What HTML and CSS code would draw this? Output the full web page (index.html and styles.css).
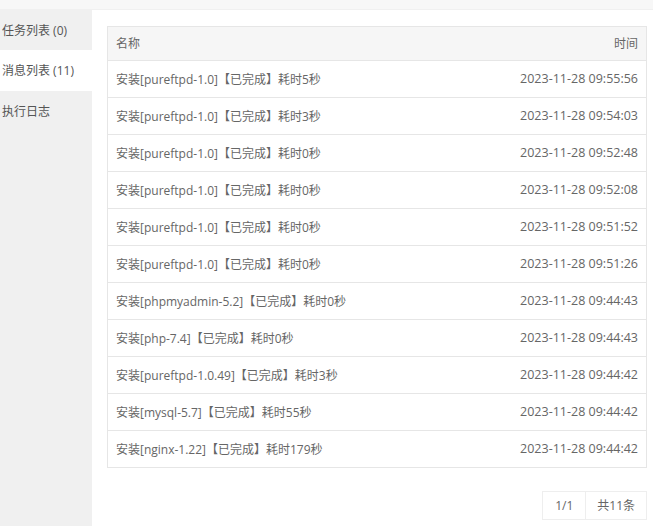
FILE: index.html
```html
<!DOCTYPE html>
<html lang="zh-CN">
<head>
    <meta charset="UTF-8">
    <title>消息列表</title>
    <link rel="stylesheet" href="styles.css">
</head>
<body>
    <div class="topbar"></div>
    <div class="layout">
        <!-- Tabs -->
        <ul class="tabs">
            <li>任务列表 (0)</li>
            <li class="active">消息列表 (11)</li>
            <li>执行日志</li>
        </ul>

        <!-- Message list -->
        <div class="content">
            <table class="msg-table">
                <thead>
                    <tr><th>名称</th><th class="time">时间</th></tr>
                </thead>
                <tbody>
                    <tr><td>安装[pureftpd-1.0]【已完成】耗时5秒</td><td class="time">2023-11-28 09:55:56</td></tr>
                    <tr><td>安装[pureftpd-1.0]【已完成】耗时3秒</td><td class="time">2023-11-28 09:54:03</td></tr>
                    <tr><td>安装[pureftpd-1.0]【已完成】耗时0秒</td><td class="time">2023-11-28 09:52:48</td></tr>
                    <tr><td>安装[pureftpd-1.0]【已完成】耗时0秒</td><td class="time">2023-11-28 09:52:08</td></tr>
                    <tr><td>安装[pureftpd-1.0]【已完成】耗时0秒</td><td class="time">2023-11-28 09:51:52</td></tr>
                    <tr><td>安装[pureftpd-1.0]【已完成】耗时0秒</td><td class="time">2023-11-28 09:51:26</td></tr>
                    <tr><td>安装[phpmyadmin-5.2]【已完成】耗时0秒</td><td class="time">2023-11-28 09:44:43</td></tr>
                    <tr><td>安装[php-7.4]【已完成】耗时0秒</td><td class="time">2023-11-28 09:44:43</td></tr>
                    <tr><td>安装[pureftpd-1.0.49]【已完成】耗时3秒</td><td class="time">2023-11-28 09:44:42</td></tr>
                    <tr><td>安装[mysql-5.7]【已完成】耗时55秒</td><td class="time">2023-11-28 09:44:42</td></tr>
                    <tr><td>安装[nginx-1.22]【已完成】耗时179秒</td><td class="time">2023-11-28 09:44:42</td></tr>
                </tbody>
            </table>

            <div class="pager">
                <span>1/1</span>
                <span>共11条</span>
            </div>
        </div>
    </div>
</body>
</html>
```

FILE: styles.css
```css
body {
    margin: 0;
    font-family: "Open Sans", "Noto Sans CJK SC", sans-serif;
    font-size: 12px;
    color: #666;
    background: #fff;
}

.topbar {
    height: 10px;
    background: #f7f7f7;
    border-bottom: 1px solid #f0f0f0;
    box-sizing: border-box;
}

.layout {
    display: flex;
    height: 516px;
}

.tabs {
    width: 92px;
    margin: 0;
    padding: 0;
    list-style: none;
    background: #f0f0f0;
}

.tabs li {
    height: 40px;
    line-height: 42px;
    padding-left: 2px;
    color: #555;
    white-space: nowrap;
}

.tabs li.active {
    height: 41px;
    background: #fff;
}

.content {
    flex: 1;
    padding: 16px 6px 0 15px;
}

.msg-table {
    width: 100%;
    border-collapse: collapse;
    border: 1px solid #e6e6e6;
}

.msg-table th,
.msg-table td {
    height: 35px;
    padding: 0 8px 1px;
    text-align: left;
    font-weight: normal;
    border-bottom: 1px solid #e6e6e6;
}

.msg-table th {
    height: 32px;
    background: #f6f6f6;
}

.msg-table td.time {
    font-size: 12.5px;
}

.msg-table .time {
    text-align: right;
}

.pager {
    display: flex;
    justify-content: flex-end;
    margin-top: 23px;
}

.pager span {
    height: 27px;
    line-height: 27px;
    padding: 0 11px;
    border: 1px solid #eee;
}

.pager span:first-child {
    padding: 0 12px;
}

.pager span + span {
    border-left: none;
}
```
